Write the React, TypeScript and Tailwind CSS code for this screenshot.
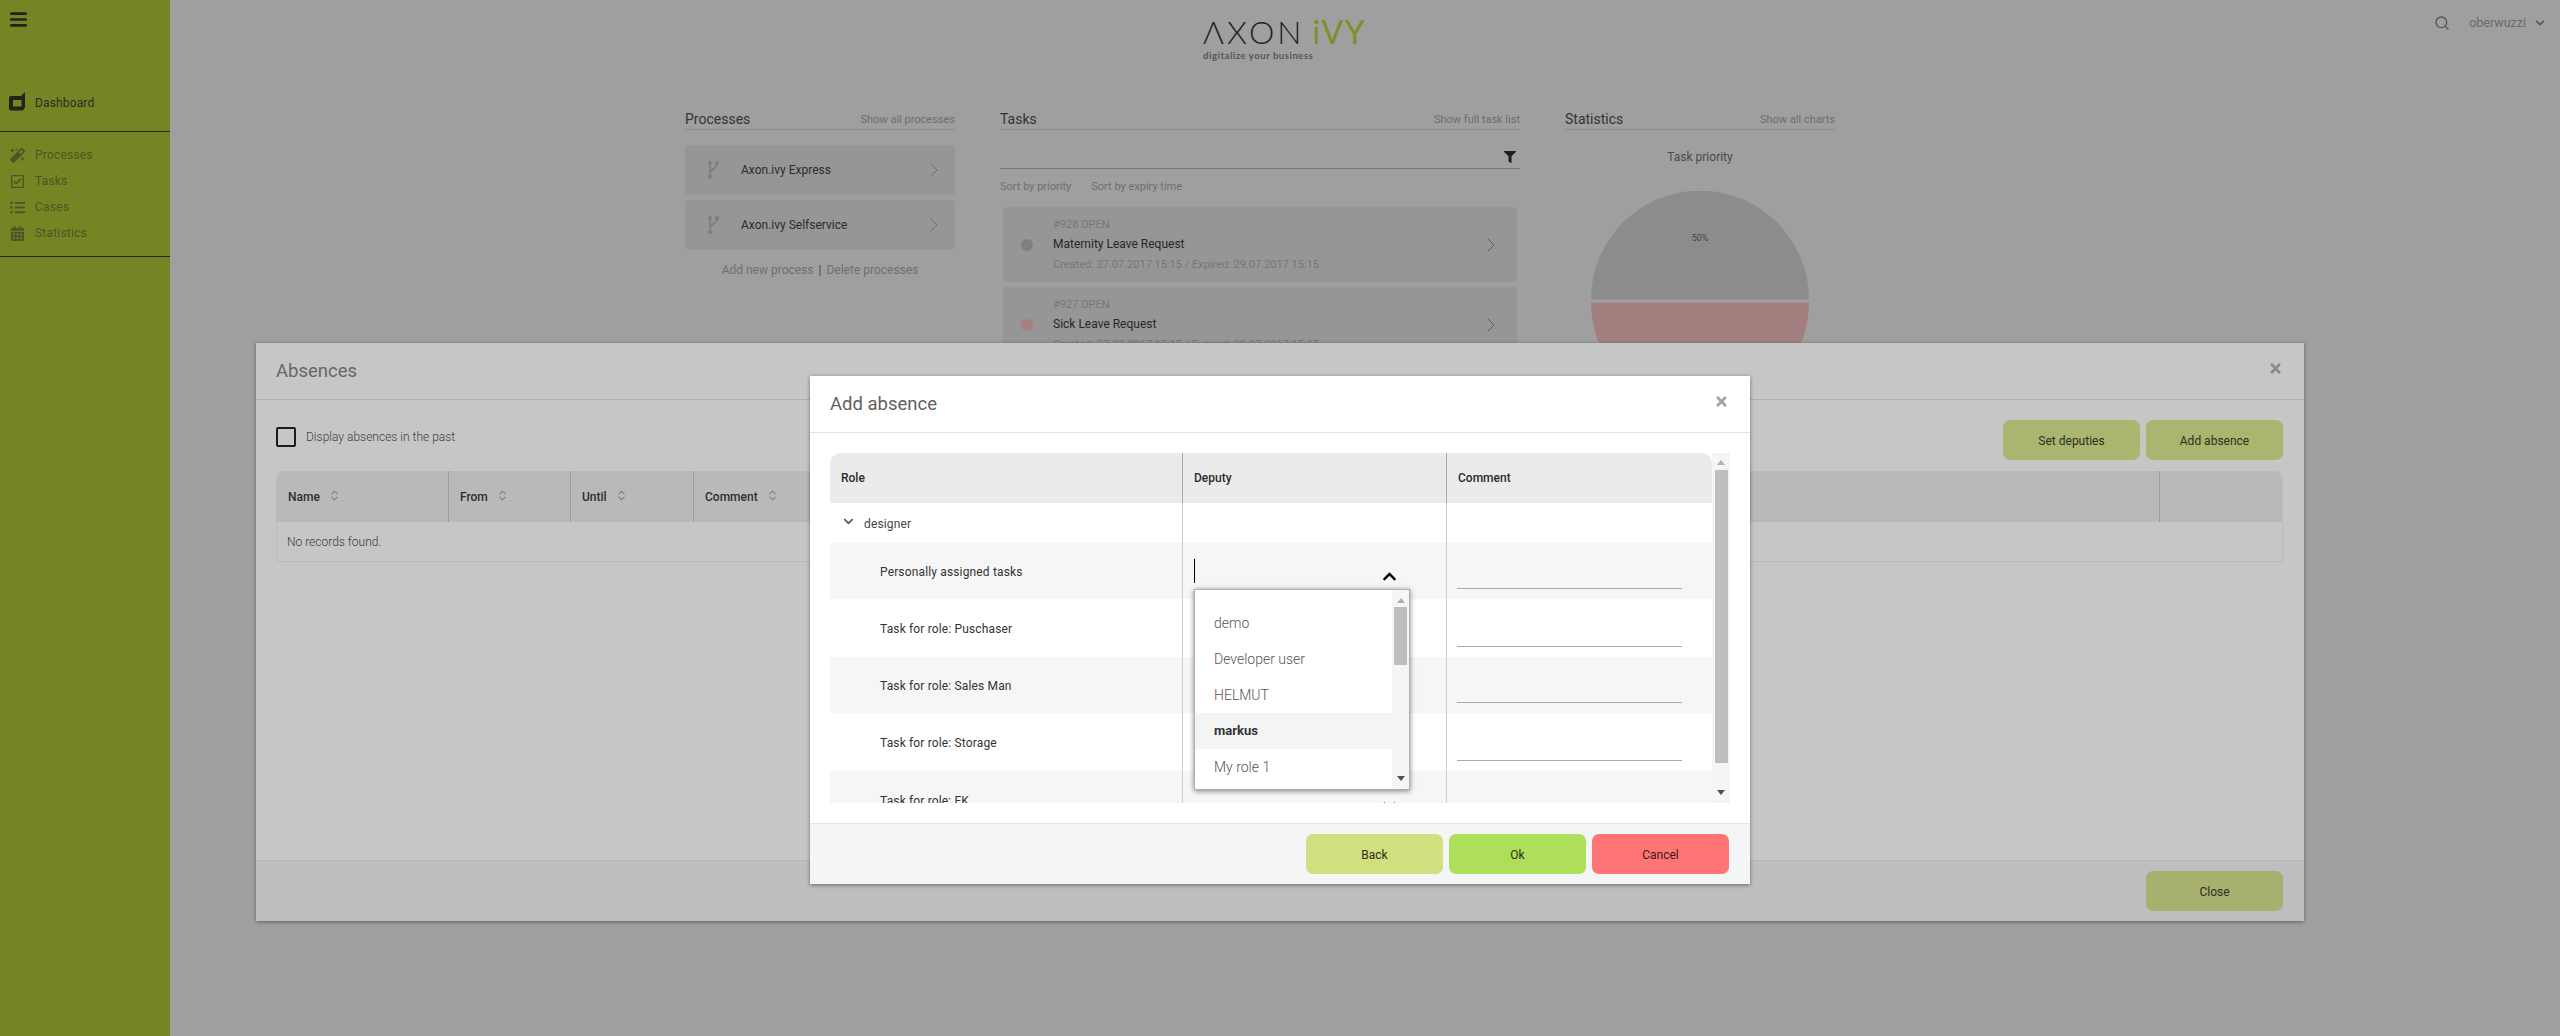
import React from "react";
import { FaBars, FaCalendarAlt, FaChevronDown, FaChevronUp, FaFilter, FaListUl, FaMagic, FaRegCheckSquare, FaTimes } from "react-icons/fa";
import { ChevronRight, ChevronsUpDown, Search } from "lucide-react";

const font = { fontFamily: "Roboto, sans-serif" };

function SideItem({ icon, label }: { icon: React.ReactNode; label: string }) {
  return (
    <div className="flex h-[26px] items-center text-[12px] text-[#4c5526]">
      <span className="flex w-[35px] justify-start pl-[10px]">{icon}</span>
      <span className="tracking-[0.2px]">{label}</span>
    </div>
  );
}

function Sidebar() {
  return (
    <aside className="flex w-[170px] shrink-0 flex-col bg-[#768524]">
      <div className="h-[91px] pl-[9px] pt-[10px] text-[#222]"><FaBars size={19} /></div>
      <div className="flex h-[41px] items-start border-b border-[#23251a] text-[12px] text-[#2b2b22]">
        <svg width="35" height="20" viewBox="0 0 35 20" className="shrink-0">
          <path fill="#22241c" fillRule="evenodd" d="M11 5H21L25 1V16L23 19.500H11C9.500 19.500 9 18.500 9 17V7C9 6 9.500 5 11 5ZM13 9V15.500H21.500V9Z" />
        </svg>
        <span className="pt-[3px] tracking-[0.15px]">Dashboard</span>
      </div>
      <div className="flex h-[125px] flex-col border-b border-[#23251a] pt-[10px]">
        <SideItem icon={<FaMagic size={15} />} label="Processes" />
        <SideItem icon={<FaRegCheckSquare size={15} />} label="Tasks" />
        <SideItem icon={<FaListUl size={15} />} label="Cases" />
        <SideItem icon={<FaCalendarAlt size={15} />} label="Statistics" />
      </div>
    </aside>
  );
}

function SectionHead({ title, link }: { title: string; link: string }) {
  return (
    <div className="flex h-[25px] items-center justify-between border-b border-[#8c8c8c] pt-[5px]">
      <span className="text-[14px] text-[#333]">{title}</span>
      <span className="pt-[1px] text-[11px] text-[#6d6d6d]">{link}</span>
    </div>
  );
}

function BranchIcon() {
  return (
    <svg width="12" height="18" viewBox="0 0 12 18" fill="none" stroke="#7c7c7c" strokeWidth="1.500">
      <circle cx="3" cy="2" r="1.300" />
      <circle cx="10" cy="2" r="1.300" />
      <circle cx="3" cy="16" r="1.300" />
      <path d="M3 3.500V14.500M10 3.500C10 7.500 3 8 3 12" />
    </svg>
  );
}

function ProcessCard({ name }: { name: string }) {
  return (
    <div className="flex h-[50px] items-center rounded-[4px] bg-[#969696] pl-[22px] pr-[9px]">
      <span className="w-[34px] shrink-0"><BranchIcon /></span>
      <span className="flex-1 text-[12px] text-[#2c2c2c]">{name}</span>
      <ChevronRight size={24} strokeWidth={1} className="text-[#6f6f6f]" />
    </div>
  );
}

function TaskCard({ id, title, meta, dot }: { id: string; title: string; meta: string; dot: string }) {
  return (
    <div className="flex h-[75px] shrink-0 items-center rounded-[4px] bg-[#969696] pl-[18px] pr-[14px]">
      <span className={`h-[12px] w-[12px] shrink-0 rounded-full ${dot}`} />
      <div className="ml-[20px] flex flex-1 flex-col gap-[5px] text-[11px] leading-[15px]">
        <span className="text-[#777]">{id}</span>
        <span className="text-[12px] text-[#262626]">{title}</span>
        <span className="text-[#777]">{meta}</span>
      </div>
      <ChevronRight size={24} strokeWidth={1} className="text-[#5c5c5c]" />
    </div>
  );
}

function Background() {
  return (
    <main className="relative flex h-full flex-1 flex-col overflow-hidden">
      <header className="relative flex h-[105px] shrink-0">
        <div className="ml-[1033px] mt-[14px] flex flex-col" style={{ fontFamily: "Lato, sans-serif" }}>
          <div className="flex text-[32px] leading-[36px] font-light tracking-[3px]">
            <span className="text-[#222]">ΛXON</span>
            <span className="ml-[8px] font-normal tracking-[1.500px] text-[#7f8f27]">iVY</span>
          </div>
          <div className="mt-[-1px] text-[9.500px] font-bold leading-[14px] tracking-[0.550px] text-[#555]">digitalize your business</div>
        </div>
        <div className="absolute right-[15px] top-[14px] flex h-[18px] items-center text-[12.500px] text-[#6a6a6a]">
          <Search size={16} strokeWidth={2} className="mr-[19px] text-[#555]" />
          <span>oberwuzzi</span>
          <FaChevronDown size={10} className="ml-[9px] text-[#555]" />
        </div>
      </header>
      <div className="flex gap-[45px] pl-[515px]">
        <section className="w-[270px] shrink-0">
          <SectionHead title="Processes" link="Show all processes" />
          <div className="mt-[15px] flex flex-col gap-[5px]">
            <ProcessCard name="Axon.ivy Express" />
            <ProcessCard name="Axon.ivy Selfservice" />
          </div>
          <div className="mt-[11px] text-center text-[12px] text-[#6f6f6f]">Add new process <span className="mx-[2px] text-[#444]">|</span> Delete processes</div>
        </section>
        <section className="w-[520px] shrink-0">
          <SectionHead title="Tasks" link="Show full task list" />
          <div className="flex h-[39px] items-end justify-end border-b border-[#767676] pb-[5px] pr-[4px] text-[#1f1f1f]"><FaFilter size={12} /></div>
          <div className="mt-[11px] flex gap-[20px] text-[11px] leading-[14px] text-[#6f6f6f]"><span>Sort by priority</span><span>Sort by expiry time</span></div>
          <div className="mx-[3px] mt-[13px] flex flex-col gap-[5px]">
            <TaskCard id="#928 OPEN" title="Maternity Leave Request" meta="Created: 27.07.2017 15:15 / Expired: 29.07.2017 15:15" dot="bg-[#808080]" />
            <TaskCard id="#927 OPEN" title="Sick Leave Request" meta="Created: 27.07.2017 15:15 / Expired: 29.07.2017 15:15" dot="bg-[#a87f7f]" />
          </div>
        </section>
        <section className="w-[270px] shrink-0">
          <SectionHead title="Statistics" link="Show all charts" />
          <div className="mt-[19px] text-center text-[12px] leading-[16px] text-[#4a4a4a]">Task priority</div>
          <svg width="218" height="240" viewBox="0 0 218 240" className="ml-[26px] mt-[26px]">
            <path d="M0 108.500A109 109 0 0 1 218 108.500Z" fill="#8c8c8c" />
            <path d="M0 111.500H218A109 109 0 0 1 0 111.500Z" fill="#a17f7f" />
            <text x="109" y="50" textAnchor="middle" fontSize="9" fill="#444" fontFamily="Roboto, sans-serif">50%</text>
          </svg>
        </section>
      </div>
    </main>
  );
}

function SortHead({ label, w, flex }: { label: string; w?: string; flex?: boolean }) {
  return (
    <div className={`flex h-full items-center gap-[8px] border-r border-[#9c9c9c] pl-[11px] text-[12px] font-medium text-[#2e2e2e] ${w ?? ""} ${flex ? "flex-1" : ""}`}>
      {label}
      <ChevronsUpDown size={13} strokeWidth={1.500} className="mt-[-3px] text-[#4a4a4a]" />
    </div>
  );
}

function Btn({ label, cls }: { label: string; cls: string }) {
  return <button className={`flex h-[40px] w-[137px] items-center justify-center rounded-[7px] pt-[2px] text-[12px] ${cls}`}>{label}</button>;
}

function AbsencesDialog() {
  return (
    <div className="absolute left-[256px] top-[343px] flex h-[578px] w-[2048px] flex-col bg-[#c6c6c6] shadow-[0_1px_4px_rgba(0,0,0,0.4)]">
      <div className="flex h-[57px] shrink-0 items-center justify-between border-b border-[#b0b0b0] pl-[20px] pr-[21px]">
        <span className="mt-[2px] text-[18.500px] text-[#666]">Absences</span>
        <FaTimes size={15} className="mb-[5px] text-[#858d94]" />
      </div>
      <div className="relative flex-1 pl-[20px] pr-[21px]">
        <div className="flex h-[71px] items-start justify-between">
          <label className="mt-[27px] flex items-center gap-[10px] text-[12px] font-light text-[#3f3f3f]">
            <span className="h-[20px] w-[20px] rounded-[2px] border-2 border-[#1c1c1c]" />
            Display absences in the past
          </label>
          <div className="mt-[20px] flex gap-[6px]">
            <Btn label="Set deputies" cls="bg-[#aab56f] text-[#2c2f1c]" />
            <Btn label="Add absence" cls="bg-[#aab56f] text-[#2c2f1c]" />
          </div>
        </div>
        <div className="rounded-t-[8px] border-x border-b border-[#bababa]">
          <div className="flex h-[51px] items-center rounded-t-[8px] bg-[#b9b9b9]">
            <SortHead label="Name" w="w-[172px]" />
            <SortHead label="From" w="w-[122px]" />
            <SortHead label="Until" w="w-[123px]" />
            <SortHead label="Comment" flex />
            <div className="h-full w-[122px]" />
          </div>
          <div className="flex h-[39px] items-center pl-[10px] text-[12px] font-light text-[#3c3c3c]">No records found.</div>
        </div>
      </div>
      <div className="flex h-[61px] shrink-0 items-center justify-end border-t border-[#b4b5b7] bg-[#bdbec0] pb-[1px] pr-[21px]">
        <Btn label="Close" cls="bg-[#a8b06f] text-[#2c2f1c]" />
      </div>
    </div>
  );
}

function Arrow({ dir, cls }: { dir: "up" | "down"; cls: string }) {
  return (
    <svg width="8" height="5" viewBox="0 0 8 5" className={cls}>
      <path d={dir === "up" ? "M0 5L4 0L8 5Z" : "M0 0L8 0L4 5Z"} />
    </svg>
  );
}

function RoleRow({ label, h, alt, open, chevron }: { label: string; h: string; alt?: boolean; open?: boolean; chevron?: boolean }) {
  return (
    <div className={`flex shrink-0 ${h} ${alt ? "bg-[#f6f6f6]" : "bg-white"}`}>
      <div className="flex w-[353px] shrink-0 items-center border-r border-[#cfcfcf] pl-[50px] pt-[2px] text-[12px] tracking-[0.15px] text-[#333]">{label}</div>
      <div className="relative w-[264px] shrink-0 border-r border-[#cfcfcf]">
        {open && <span className="absolute left-[11px] top-[16px] h-[24px] w-px bg-black" />}
        {open && <FaChevronUp size={15} className="absolute right-[49px] top-[26px] text-black" />}
        {chevron && <FaChevronDown size={15} className="absolute right-[49px] top-[28px] text-black" />}
      </div>
      <div className="flex flex-1 items-end pb-[10px] pl-[10px] pr-[30px]"><div className="h-px w-full bg-[#aaa]" /></div>
    </div>
  );
}

function Dropdown() {
  const items = ["demo", "Developer user", "HELMUT", "markus", "My role 1"];
  return (
    <div className="absolute left-[384px] top-[156px] z-10 flex h-[201px] w-[216px] border border-[#b0b0b0] bg-white shadow-[0_1px_5px_rgba(0,0,0,0.5)]">
      <ul className="flex flex-1 flex-col pt-[15px] text-[14px] font-light text-[#555]">
        {items.map((item) => (
          <li key={item} className={`flex h-[36px] shrink-0 items-center pl-[19px] ${item === "markus" ? "bg-[#f4f4f4] text-[13px] font-bold text-[#333]" : ""}`}>{item}</li>
        ))}
      </ul>
      <div className="relative flex w-[17px] shrink-0 flex-col items-center bg-[#f5f5f5] px-[2px]">
        <Arrow dir="up" cls="mt-[8px] fill-[#b0b0b0]" />
        <div className="mt-[4px] h-[58px] w-[13px] bg-[#bebebe]" />
        <Arrow dir="down" cls="mt-auto mb-[8px] fill-[#505050]" />
      </div>
    </div>
  );
}

function AddDialog() {
  return (
    <div className="absolute left-[810px] top-[376px] flex h-[508px] w-[940px] flex-col bg-white shadow-[0_1px_4px_rgba(0,0,0,0.45)]">
      <div className="flex h-[57px] shrink-0 items-center justify-between border-b border-[#e4e4e4] pl-[20px] pr-[21px]">
        <span className="mt-[2px] text-[18.500px] text-[#5f5f5f]">Add absence</span>
        <FaTimes size={15} className="mb-[6px] text-[#9aa5ad]" />
      </div>
      <div className="relative flex-1">
        <div className="ml-[20px] mt-[20px] flex h-[350px] w-[900px]">
          <div className="flex w-[882px] flex-col overflow-hidden">
            <div className="flex h-[50px] shrink-0 rounded-t-[10px] bg-[#ebebeb] text-[12px] font-medium text-[#2b2b2b]">
              <div className="flex w-[353px] shrink-0 items-center border-r border-[#a9a9a9] pl-[11px]">Role</div>
              <div className="flex w-[264px] shrink-0 items-center border-r border-[#a9a9a9] pl-[11px]">Deputy</div>
              <div className="flex flex-1 items-center pl-[11px]">Comment</div>
            </div>
            <div className="flex h-[40px] shrink-0 bg-white">
              <div className="flex w-[353px] shrink-0 items-center border-r border-[#cfcfcf] pl-[13px] pt-[2px] text-[12px] tracking-[0.15px] text-[#444]">
                <FaChevronDown size={11} className="mb-[5px] mr-[10px] text-[#4c6672]" />
                designer
              </div>
              <div className="w-[264px] shrink-0 border-r border-[#cfcfcf]" />
            </div>
            <RoleRow label="Personally assigned tasks" h="h-[56px]" alt open />
            <RoleRow label="Task for role: Puschaser" h="h-[58px]" />
            <RoleRow label="Task for role: Sales Man" h="h-[56px]" alt />
            <RoleRow label="Task for role: Storage" h="h-[58px]" />
            <RoleRow label="Task for role: FK" h="h-[58px]" alt chevron />
          </div>
          <div className="flex w-[18px] shrink-0 flex-col items-center bg-[#f5f5f5] px-[2px]">
            <Arrow dir="up" cls="mt-[7px] fill-[#b0b0b0]" />
            <div className="mt-[5px] h-[293px] w-[13px] bg-[#bebebe]" />
            <Arrow dir="down" cls="mt-auto mb-[8px] fill-[#505050]" />
          </div>
        </div>
        <Dropdown />
      </div>
      <div className="flex h-[61px] shrink-0 items-center justify-end gap-[6px] border-t border-[#e6e7e9] bg-[#f4f5f7] pr-[21px]">
        <Btn label="Back" cls="bg-[#d2df7f] text-[#2b2e14]" />
        <Btn label="Ok" cls="bg-[#addf5a] text-[#2b2e14]" />
        <Btn label="Cancel" cls="bg-[#ff7575] text-[#3a1a1a]" />
      </div>
    </div>
  );
}

export default function App() {
  return (
    <div className="relative flex h-[1036px] w-[2560px] overflow-hidden bg-[#9f9f9f]" style={font}>
      <Sidebar />
      <Background />
      <AbsencesDialog />
      <AddDialog />
    </div>
  );
}
